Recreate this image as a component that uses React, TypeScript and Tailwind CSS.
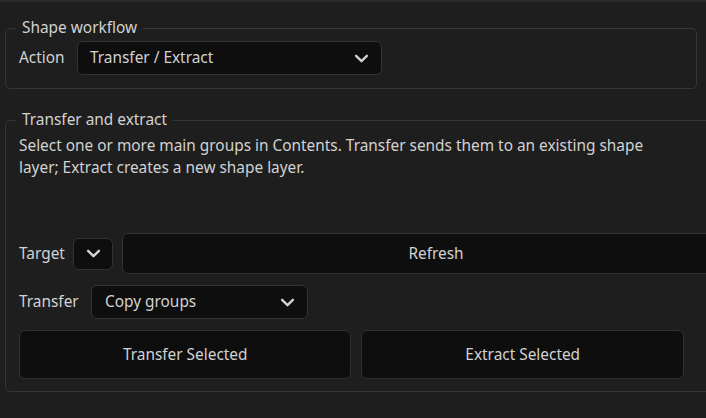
import React from "react";

function Chevron({ className = "" }: { className?: string }) {
  return (
    <svg viewBox="0 0 16 10" width="15" height="9" className={className} fill="none">
      <path d="M2 2 L8 8 L14 2" stroke="#d2d2d2" strokeWidth="2.6" strokeLinecap="round" strokeLinejoin="round" />
    </svg>
  );
}

export default function App() {
  return (
    <div
      className="w-[706px] h-[418px] bg-[#1e1e1e] text-[#d2d2d2] text-[15.4px] leading-[22px] border-t-2 border-[#2a2a2a] px-[5px] pt-[15px] overflow-hidden"
      style={{ fontFamily: '"Noto Sans", "Open Sans", sans-serif' }}
    >
      <fieldset className="border border-[#363636] rounded-[5px] pl-[13px] pr-[13px] pt-[2px] pb-[13px] w-[692px]">
        <legend className="ml-[-3px] px-[6px]">Shape workflow</legend>
        <div className="flex items-center">
          <span className="w-[58px] shrink-0">Action</span>
          <div className="w-[305px] h-[34px] flex items-center justify-between bg-[#0e0e0e] border border-[#333333] rounded-[6px] pl-[12px] pr-[12px]">
            <span>Transfer / Extract</span>
            <Chevron />
          </div>
        </div>
      </fieldset>

      <fieldset className="mt-[20px] border border-[#363636] rounded-[5px] pl-[13px] pr-[12px] pt-[4px] pb-[12px] w-[692px]">
        <legend className="ml-[-3px] px-[6px]">Transfer and extract</legend>
        <p className="w-[660px]">
          Select one or more main groups in Contents. Transfer sends them to an existing shape layer; Extract creates a new shape layer.
        </p>
        <div className="mt-[54px] mr-[-12px] overflow-hidden">
          <div className="flex items-center h-[41px]">
            <span className="w-[54px] shrink-0">Target</span>
            <div className="w-[40px] h-[32px] shrink-0 flex items-center justify-center bg-[#0e0e0e] border border-[#333333] rounded-[6px]">
              <Chevron />
            </div>
            <button className="ml-[9px] w-[628px] h-[41px] shrink-0 bg-[#0e0e0e] border border-[#333333] rounded-[6px] text-center">
              Refresh
            </button>
          </div>
        </div>
        <div className="mt-[11px] flex items-center h-[34px]">
          <span className="w-[72px] shrink-0">Transfer</span>
          <div className="w-[217px] h-[34px] flex items-center justify-between bg-[#0e0e0e] border border-[#333333] rounded-[6px] pl-[13px] pr-[12px]">
            <span>Copy groups</span>
            <Chevron />
          </div>
        </div>
        <div className="mt-[11px] flex gap-[10px] w-[665px]">
          <button className="flex-auto h-[49px] bg-[#0e0e0e] border border-[#303030] rounded-[6px] px-[6px]">
            Transfer Selected
          </button>
          <button className="flex-auto h-[49px] bg-[#0e0e0e] border border-[#303030] rounded-[6px] px-[6px]">
            Extract Selected
          </button>
        </div>
      </fieldset>
    </div>
  );
}
